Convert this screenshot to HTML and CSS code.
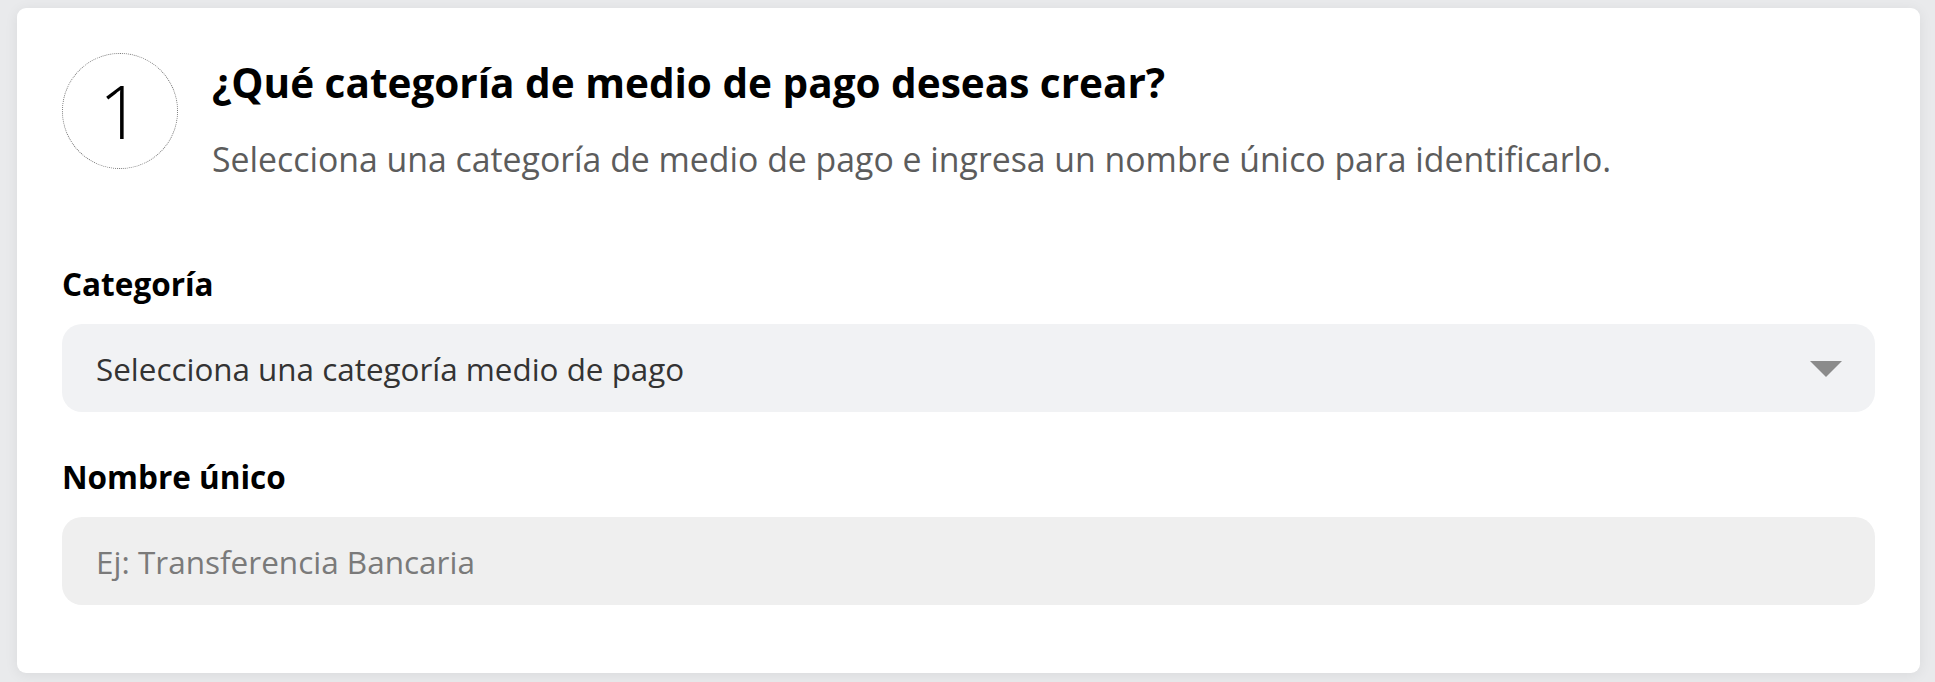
FILE: index.html
```html
<!DOCTYPE html>
<html lang="es">
<head>
<meta charset="utf-8">
<title>Medio de pago</title>
<link rel="stylesheet" href="styles.css">
</head>
<body>
<div class="card">
  <div class="header">
    <div class="step">1</div>
    <div class="header-text">
      <h1 class="title">¿Qué categoría de medio de pago deseas crear?</h1>
      <p class="subtitle">Selecciona una categoría de medio de pago e ingresa un nombre único para identificarlo.</p>
    </div>
  </div>
  <div class="field field-first">
    <label class="label">Categoría</label>
    <div class="select">
      <span class="select-text">Selecciona una categoría medio de pago</span>
      <svg class="caret" width="32" height="16" viewBox="0 0 32 16"><polygon points="0,0 32,0 16,16" fill="#8b8b8b"/></svg>
    </div>
  </div>
  <div class="field">
    <label class="label">Nombre único</label>
    <input class="input" type="text" placeholder="Ej: Transferencia Bancaria">
  </div>
</div>
</body>
</html>
```

FILE: styles.css
```css
html, body {
  margin: 0;
  padding: 0;
}
body {
  background: #e9eaec;
  font-family: "Open Sans", "Noto Sans", sans-serif;
  padding: 8px 15px 9px 17px;
}
.card {
  background: #ffffff;
  border-radius: 9px;
  box-shadow: 0 2px 14px rgba(0, 0, 0, 0.07);
  padding: 45px 45px 68px 45px;
}
.header {
  display: flex;
  align-items: flex-start;
  gap: 34px;
}
.step {
  width: 114px;
  height: 114px;
  flex: 0 0 auto;
  border: 1px dotted #777777;
  border-radius: 50%;
  display: flex;
  align-items: center;
  justify-content: center;
  font-size: 74px;
  font-weight: 300;
  color: #000;
  line-height: 1;
}
.header-text {
  padding-top: 5px;
}
.title {
  margin: 0;
  font-size: 40.5px;
  line-height: 50px;
  font-weight: 700;
  color: #000;
}
.subtitle {
  margin: 30px 0 0 0;
  font-size: 33.8px;
  line-height: 42px;
  color: #5c5c5c;
}
.field {
  margin-top: 45px;
}
.field-first {
  margin-top: 84px;
}
.label {
  display: block;
  font-size: 31.5px;
  line-height: 40px;
  font-weight: 700;
  color: #000;
  margin-bottom: 20px;
}
.select {
  height: 88px;
  box-sizing: border-box;
  background: #f1f2f4;
  border-radius: 20px;
  padding: 0 33px 0 34px;
  display: flex;
  align-items: center;
  justify-content: space-between;
}
.select-text {
  font-size: 31.4px;
  color: #333;
}
.caret {
  display: block;
  margin-top: 1px;
}
.input {
  display: block;
  width: 100%;
  height: 88px;
  box-sizing: border-box;
  background: #efefef;
  border: none;
  border-radius: 20px;
  padding: 0 34px;
  font-family: "Open Sans", "Noto Sans", sans-serif;
  font-size: 31.5px;
  color: #333;
  outline: none;
}
.input::placeholder {
  color: #7a7a7a;
}
```
